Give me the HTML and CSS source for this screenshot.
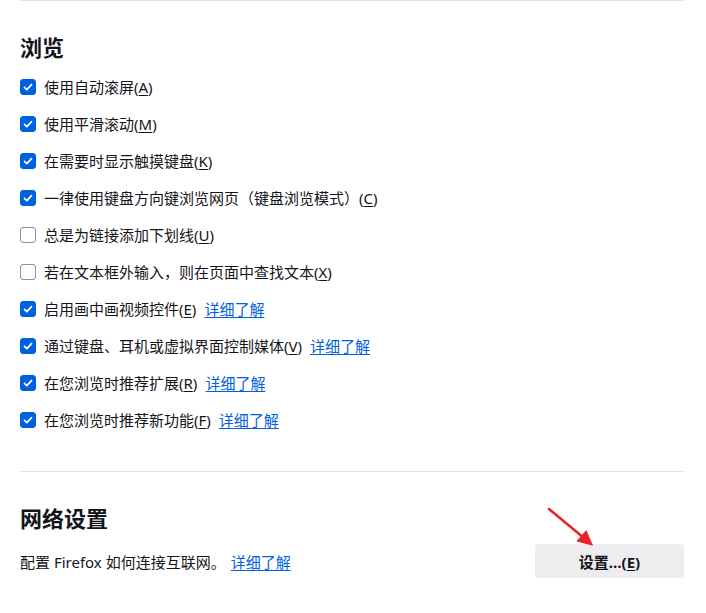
FILE: index.html
```html
<!DOCTYPE html>
<html lang="zh-CN">

<head>
    <meta charset="UTF-8">
    <meta name="viewport" content="width=device-width, initial-scale=1.0">
    <title>设置</title>
    <link rel="stylesheet" href="styles.css">
</head>

<body>
    <div class="prefs">
        <section class="pane">
            <h1>浏览</h1>
            <ul class="options">
                <li class="option"><span class="box checked"><svg viewBox="0 0 16 16"><path d="M4 8.3 6.7 11 12 5.3" /></svg></span>使用自动滚屏(<u>A</u>)</li>
                <li class="option"><span class="box checked"><svg viewBox="0 0 16 16"><path d="M4 8.3 6.7 11 12 5.3" /></svg></span>使用平滑滚动(<u>M</u>)</li>
                <li class="option"><span class="box checked"><svg viewBox="0 0 16 16"><path d="M4 8.3 6.7 11 12 5.3" /></svg></span>在需要时显示触摸键盘(<u>K</u>)</li>
                <li class="option"><span class="box checked"><svg viewBox="0 0 16 16"><path d="M4 8.3 6.7 11 12 5.3" /></svg></span>一律使用键盘方向键浏览网页（键盘浏览模式）(<u>C</u>)</li>
                <li class="option"><span class="box"></span>总是为链接添加下划线(<u>U</u>)</li>
                <li class="option"><span class="box"></span>若在文本框外输入，则在页面中查找文本(<u>X</u>)</li>
                <li class="option"><span class="box checked"><svg viewBox="0 0 16 16"><path d="M4 8.3 6.7 11 12 5.3" /></svg></span>启用画中画视频控件(<u>E</u>)<a href="#">详细了解</a></li>
                <li class="option"><span class="box checked"><svg viewBox="0 0 16 16"><path d="M4 8.3 6.7 11 12 5.3" /></svg></span>通过键盘、耳机或虚拟界面控制媒体(<u>V</u>)<a href="#">详细了解</a></li>
                <li class="option"><span class="box checked"><svg viewBox="0 0 16 16"><path d="M4 8.3 6.7 11 12 5.3" /></svg></span>在您浏览时推荐扩展(<u>R</u>)<a href="#">详细了解</a></li>
                <li class="option"><span class="box checked"><svg viewBox="0 0 16 16"><path d="M4 8.3 6.7 11 12 5.3" /></svg></span>在您浏览时推荐新功能(<u>F</u>)<a href="#">详细了解</a></li>
            </ul>
        </section>

        <section class="pane network">
            <h1>网络设置</h1>
            <div class="network-row">
                <p>配置 Firefox 如何连接互联网。<a href="#">详细了解</a></p>
                <button class="settings-button">设置…(<u>E</u>)</button>
            </div>
            <!-- red annotation arrow pointing at the button -->
            <svg class="arrow" width="60" height="45" viewBox="0 0 60 45">
                <path d="M3 3 38 32" />
                <path class="head" d="M46 39 31 35 40 25Z" />
            </svg>
        </section>
    </div>
</body>

</html>
```

FILE: styles.css
```css
body {
    margin: 0;
    font-family: "Noto Sans", "Noto Sans CJK SC", sans-serif;
    font-size: 15px;
    color: #15141a;
    background: white;
}

.prefs {
    padding: 0 22px 0 20px;
}

.pane {
    position: relative;
    border-top: 1px solid #e0e0e6;
    padding-top: 31px;
}

.pane h1 {
    margin: 0;
    font-size: 22px;
    line-height: 30px;
    font-weight: bold;
}

.options {
    list-style: none;
    margin: 6px 0 0 0;
    padding: 0 0 33px 0;
}

.option {
    display: flex;
    align-items: center;
    height: 37px;
    white-space: nowrap;
}

.option u,
.settings-button u {
    text-underline-offset: 2px;
}

.box {
    width: 14px;
    height: 14px;
    border: 1px solid #8f8f9d;
    border-radius: 3px;
    margin-right: 8px;
    flex-shrink: 0;
    display: flex;
}

.box.checked {
    background: #0061e0;
    border-color: #0061e0;
}

.box svg {
    width: 14px;
    height: 14px;
    fill: none;
    stroke: white;
    stroke-width: 2;
    stroke-linecap: round;
    stroke-linejoin: round;
}

a {
    color: #0061e0;
    text-decoration: underline;
    text-underline-offset: 2px;
    margin-left: 8px;
}

.network {
    height: 140px;
}

.network-row {
    display: flex;
    align-items: center;
    justify-content: space-between;
    margin-top: 11px;
}

.network-row p {
    margin: 0;
}

.network-row p a {
    margin-left: 5px;
}

.settings-button {
    width: 149px;
    height: 34px;
    border: none;
    border-radius: 4px;
    background: #ededf0;
    font-family: inherit;
    font-size: 15px;
    font-weight: bold;
    color: #15141a;
    padding: 0;
}

.arrow {
    position: absolute;
    left: 526px;
    top: 34px;
}

.arrow path {
    stroke: #e8212b;
    stroke-width: 2.5;
    stroke-linecap: round;
    fill: none;
}

.arrow .head {
    fill: #e8212b;
    stroke-width: 1;
    stroke-linejoin: round;
}
```
